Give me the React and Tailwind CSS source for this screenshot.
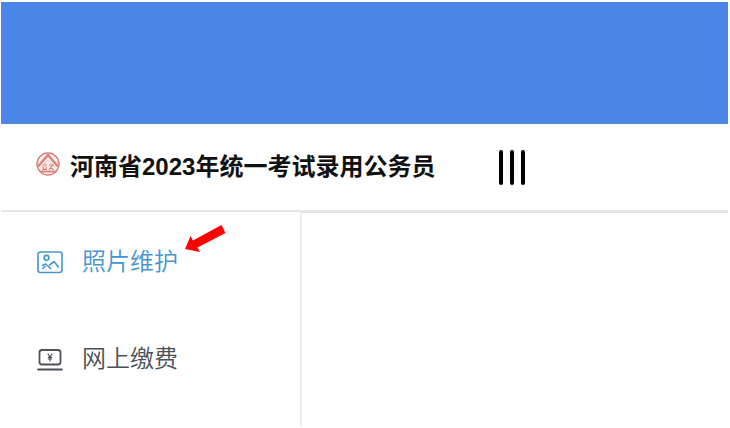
import React from "react";

function Emblem() {
  return (
    <svg className="mb-1.5 size-6 shrink-0" viewBox="0 0 24 24" fill="none" stroke="#dc817a" aria-hidden="true">
      <circle cx="12" cy="12" r="11" strokeWidth="1.400" fill="#fdf1ef" />
      <path d="M2 14.500 12 3l10 11.500" strokeWidth="2.400" />
      <path d="M5.500 15 12 8l6.500 7" strokeWidth="1" stroke="#f0bdb8" />
      <path d="M3.500 19.500h17" strokeWidth="1.800" />
      <path d="M6.500 13h4.500M7 14.500l.8 3M10.300 14.500l-.8 3M6 17.500h5M13 13h5M16.500 13l-3.500 5M14 15.500l4 2.500" strokeWidth="1.200" />
    </svg>
  );
}

function PhotoIcon() {
  return (
    <svg className="h-6 w-7 shrink-0" viewBox="0 0 28 24" fill="none" stroke="currentColor" strokeWidth="1.600" strokeLinecap="round" strokeLinejoin="round" aria-hidden="true">
      <rect x="2" y="2" width="24" height="20.500" rx="2.500" />
      <circle cx="10.500" cy="7.800" r="2.400" />
      <path d="M6.500 15.500 9.500 14l5 4.500M6.500 18.500l2.500-2" />
      <path d="m13.500 15 4.500-3.500 4.500 5.500" />
    </svg>
  );
}

function PaymentIcon() {
  return (
    <svg className="h-6 w-7 shrink-0" viewBox="0 0 28 24" fill="none" stroke="currentColor" strokeWidth="1.800" strokeLinecap="round" strokeLinejoin="round" aria-hidden="true">
      <rect x="3.500" y="3" width="21" height="14.500" rx="2.500" />
      <path d="M2 22.500h24" />
      <path d="m12 7 2 3 2-3M14 10v4M12.300 10.300h3.400M12.300 12h3.400" strokeWidth="1.200" />
    </svg>
  );
}

function NavItem({ icon, label, active, children }) {
  return (
    <li className="flex h-[97px] items-center pl-[35px]">
      <a
        href="#"
        aria-current={active ? "page" : undefined}
        className={`relative flex items-center gap-[18px] text-2xl font-[350] ${active ? "text-[#4595d1]" : "text-[#4b5156]"}`}
      >
        {icon}
        <span>{label}</span>
        {children}
      </a>
    </li>
  );
}

export default function App() {
  return (
    <div className="flex min-h-screen flex-col bg-white pt-0.5 pr-0.5 pb-0.5 pl-px font-['Liberation_Sans','Noto_Sans_CJK_SC',sans-serif]">
      <div className="h-[122px] border-b border-[#5b8ac9] bg-[#4a85e8]" />
      <header className="flex h-[88px] items-center border-b-2 border-[#e6e6e6] pl-[35px]">
        <Emblem />
        <h1 className="ml-2.5 text-2xl font-bold whitespace-nowrap text-[#111111]">
          河南省2023年统一考试录用公务员
        </h1>
        <button type="button" aria-label="展开菜单" className="ml-16 flex shrink-0 gap-[7px]">
          <span className="h-[35px] w-1 rounded-full bg-black" />
          <span className="h-[35px] w-1 rounded-full bg-black" />
          <span className="h-[35px] w-1 rounded-full bg-black" />
        </button>
      </header>
      <div className="flex flex-1">
        <nav className="w-[301px] shrink-0 border-r-2 border-[#ececec] pt-px">
          <ul>
            <NavItem icon={<PhotoIcon />} label="照片维护" active>
              <svg className="absolute -top-6 left-[148px] h-8 w-11" viewBox="0 0 44 32" fill="#fe0000" aria-hidden="true">
                <path d="M1 27 6.500 14l2.500 4.500L37.500 3l4 8L13.500 25.500l2.500 4.500Z" />
              </svg>
            </NavItem>
            <NavItem icon={<PaymentIcon />} label="网上缴费" />
          </ul>
        </nav>
        <main className="flex-1 border-t border-[#dedede]" />
      </div>
    </div>
  );
}
